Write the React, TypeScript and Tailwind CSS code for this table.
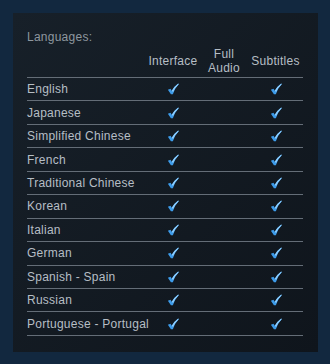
import React from "react";

const languages: [string, boolean, boolean, boolean][] = [
  ["English", true, false, true],
  ["Japanese", true, false, true],
  ["Simplified Chinese", true, false, true],
  ["French", true, false, true],
  ["Traditional Chinese", true, false, true],
  ["Korean", true, false, true],
  ["Italian", true, false, true],
  ["German", true, false, true],
  ["Spanish - Spain", true, false, true],
  ["Russian", true, false, true],
  ["Portuguese - Portugal", true, false, true],
];

function Check() {
  return (
    <svg width="12" height="12" viewBox="0 0 11 11" aria-hidden="true">
      <path
        d="M0.8 6.2 L3.2 5.2 L4.4 7.2 Q6.6 3 10.3 0.4 L10.7 1.1 Q7.4 4.4 5.4 10.2 L3.6 10.4 Z"
        fill="#3d9be9"
      />
      <path d="M4.4 7.2 Q6.6 3 10.3 0.4 L10.7 1.1 Q7.6 4 5.6 8.2 Z" fill="#8fcfff" />
    </svg>
  );
}

export default function App() {
  return (
    <div
      className="w-[330px] h-[364px] bg-[#12283f] pt-[13px] pl-[13px]"
      style={{ fontFamily: '"Liberation Sans", Arial, sans-serif' }}
    >
      <div className="w-[305px] h-[339px] bg-gradient-to-br from-[#172029] to-[#0f151c] px-[14px] pt-[17px]">
        <div className="text-[12px] leading-[14px] tracking-[0.25px] text-[#8e979f]">Languages:</div>
        <div className="w-[276px] mt-[2px] text-[12px] tracking-[0.25px] text-[#b6bec5]">
          <div className="flex items-end h-[32px] border-b border-[#646d77] pb-[2px]">
            <div className="w-[119px]" />
            <div className="w-[54px] text-center leading-[14px] pb-[7px]">Interface</div>
            <div className="w-[48px] text-center leading-[14px]">
              Full
              <br />
              Audio
            </div>
            <div className="w-[55px] text-center leading-[14px] pb-[7px]">Subtitles</div>
          </div>
          {languages.map(([name, ui, audio, subs]) => (
            <div
              key={name}
              className="flex items-center h-[23.45px] border-b border-[#646d77] whitespace-nowrap"
            >
              <div className="w-[119px] leading-[14px]">{name}</div>
              <div className="w-[54px] flex justify-center">{ui && <Check />}</div>
              <div className="w-[48px] flex justify-center">{audio && <Check />}</div>
              <div className="w-[55px] flex justify-center">{subs && <Check />}</div>
            </div>
          ))}
        </div>
      </div>
    </div>
  );
}
